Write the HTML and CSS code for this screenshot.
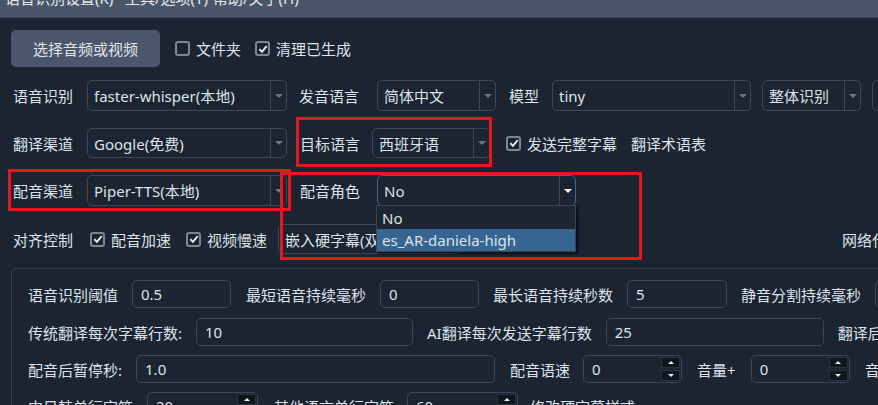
FILE: index.html
```html
<!DOCTYPE html>
<html lang="zh-CN">
<head>
    <meta charset="UTF-8">
    <meta name="viewport" content="width=device-width, initial-scale=1.0">
    <title>视频翻译配音</title>
    <link rel="stylesheet" href="styles.css">
</head>
<body>
    <div class="menubar">
        <div class="menu-items">
            <span class="m-first">语音识别设置(R)</span>
            <span class="m-second">工具/选项(T)</span>
            <span>帮助/关于(H)</span>
        </div>
    </div>

    <div class="toolbar">
        <button class="btn-select">选择音频或视频</button>
        <label class="check m15"><span class="box"></span>文件夹</label>
        <label class="check m14"><span class="box"><svg viewBox="0 0 10 10"><path d="M1.4 5.2 L3.9 7.8 L8.7 2.2"/></svg></span>清理已生成</label>
    </div>

    <div class="row r2">
        <span class="lbl">语音识别</span>
        <div class="combo m14 w200"><span class="val">faster-whisper(本地)</span><span class="arrow"></span></div>
        <span class="lbl m12">发音语言</span>
        <div class="combo m18 w119"><span class="val">简体中文</span><span class="arrow"></span></div>
        <span class="lbl m13">模型</span>
        <div class="combo m13 w199"><span class="val">tiny</span><span class="arrow"></span></div>
        <div class="combo m11 w99"><span class="val">整体识别</span><span class="arrow"></span></div>
        <div class="combo m11 w99"><span class="val"></span><span class="arrow"></span></div>
    </div>

    <div class="row r3">
        <span class="lbl">翻译渠道</span>
        <div class="combo m14 w200"><span class="val">Google(免费)</span><span class="arrow"></span></div>
        <span class="lbl m13">目标语言</span>
        <div class="combo m12 w118"><span class="val">西班牙语</span><span class="arrow"></span></div>
        <label class="check m16"><span class="box"><svg viewBox="0 0 10 10"><path d="M1.4 5.2 L3.9 7.8 L8.7 2.2"/></svg></span>发送完整字幕</label>
        <span class="lbl m14">翻译术语表</span>
    </div>

    <div class="row r4">
        <span class="lbl">配音渠道</span>
        <div class="combo m14 w200"><span class="val">Piper-TTS(本地)</span><span class="arrow"></span></div>
        <span class="lbl m13">配音角色</span>
        <div class="combo focus m17 w199"><span class="val">No</span><span class="arrow"></span></div>
    </div>

    <div class="row r5">
        <span class="lbl">对齐控制</span>
        <label class="check m17"><span class="box"><svg viewBox="0 0 10 10"><path d="M1.4 5.2 L3.9 7.8 L8.7 2.2"/></svg></span>配音加速</label>
        <label class="check m15"><span class="box"><svg viewBox="0 0 10 10"><path d="M1.4 5.2 L3.9 7.8 L8.7 2.2"/></svg></span>视频慢速</label>
        <div class="combo m11 w184"><span class="val">嵌入硬字幕(双语)</span><span class="arrow"></span></div>
        <span class="lbl proxy">网络代理</span>
    </div>

    <div class="group">
        <div class="grow">
            <span>语音识别阈值</span>
            <div class="field w99">0.5</div>
            <span class="g1">最短语音持续毫秒</span>
            <div class="field w99">0</div>
            <span>最长语音持续秒数</span>
            <div class="field w100">5</div>
            <span>静音分割持续毫秒</span>
            <div class="field w100">200</div>
        </div>
        <div class="grow gb">
            <span>传统翻译每次字幕行数:</span>
            <div class="field w217">10</div>
            <span>AI翻译每次发送字幕行数</span>
            <div class="field w218">25</div>
            <span>翻译后字幕</span>
        </div>
        <div class="grow">
            <span>配音后暂停秒:</span>
            <div class="field w359">1.0</div>
            <span class="g1">配音语速</span>
            <div class="field spin w99 gm">0<span class="spin-btns"><i class="up"></i><i class="down"></i></span></div>
            <span class="g1">音量+</span>
            <div class="field spin w99 g1">0<span class="spin-btns"><i class="up"></i><i class="down"></i></span></div>
            <span class="g1">音调+</span>
        </div>
        <div class="grow">
            <span>中日韩单行字符</span>
            <div class="field spin w111">20<span class="spin-btns"><i class="up"></i><i class="down"></i></span></div>
            <span class="g2">其他语言单行字符</span>
            <div class="field spin w111 gm">60<span class="spin-btns"><i class="up"></i><i class="down"></i></span></div>
            <span class="gs">修改硬字幕样式</span>
        </div>
    </div>

    <div class="popup">
        <div>No</div>
        <div class="hl">es_AR-daniela-high</div>
    </div>

    <div class="mark mark-a"></div>
    <div class="mark mark-b"></div>
    <div class="mark mark-c"></div>
</body>
</html>
```

FILE: styles.css
```css
* {
    box-sizing: border-box;
}
body {
    margin: 0;
    width: 878px;
    height: 405px;
    overflow: hidden;
    position: relative;
    background: #1b2430;
    color: #dde3eb;
    font-family: "Noto Sans", "Noto Sans CJK SC", sans-serif;
    font-size: 15px;
}
.menubar {
    height: 18px;
    background: #495669;
    border-bottom: 1px solid #3a4658;
    overflow: hidden;
}
.menu-items {
    display: flex;
    padding-left: 5px;
    margin-top: -9px;
    line-height: 15px;
    color: #e4e8ee;
    white-space: nowrap;
}
.m-first {
    width: 120px;
}
.m-second {
    width: 88px;
}
.toolbar {
    display: flex;
    align-items: center;
    height: 37px;
    margin-top: 12px;
    padding-left: 11px;
}
.btn-select {
    width: 149px;
    height: 37px;
    flex-shrink: 0;
    background: #4a566a;
    border: none;
    border-radius: 5px;
    color: #e1e6ee;
    font: inherit;
}
.check {
    display: flex;
    align-items: center;
    gap: 6px;
    flex-shrink: 0;
    white-space: nowrap;
}
.box {
    width: 15px;
    height: 15px;
    border: 2px solid #80878f;
    border-radius: 3px;
    background: #1b2430;
    display: flex;
    align-items: center;
    justify-content: center;
}
.box svg {
    width: 10px;
    height: 10px;
    fill: none;
    stroke: #eef1f5;
    stroke-width: 1.9;
}
.row {
    display: flex;
    align-items: center;
    padding-left: 13px;
    white-space: nowrap;
}
.row > * {
    flex-shrink: 0;
}
.r2 {
    height: 31px;
    margin-top: 13px;
}
.r3 {
    height: 30px;
    margin-top: 17px;
}
.r4 {
    height: 31px;
    margin-top: 17px;
}
.r5 {
    height: 30px;
    margin-top: 18px;
}
.m11 { margin-left: 11px; }
.m12 { margin-left: 12px; }
.m13 { margin-left: 13px; }
.m14 { margin-left: 14px; }
.m15 { margin-left: 15px; }
.m16 { margin-left: 16px; }
.m17 { margin-left: 17px; }
.m18 { margin-left: 18px; }
.proxy {
    margin-left: 380px;
}
.combo {
    height: 100%;
    display: flex;
    border: 1px solid #3c4656;
    border-radius: 5px;
}
.combo .val {
    flex: 1;
    padding-left: 6px;
    display: flex;
    align-items: center;
    overflow: hidden;
}
.combo .arrow {
    width: 16px;
    border-left: 1px solid #3c4656;
    display: flex;
    align-items: center;
    justify-content: center;
}
.combo .arrow::after {
    content: "";
    border-left: 4px solid transparent;
    border-right: 4px solid transparent;
    border-top: 4px solid #6c7584;
}
.combo.focus {
    border-color: #3b6690;
}
.combo.focus .arrow::after {
    border-top-color: #f2f4f7;
}
.w99 { width: 99px; }
.w100 { width: 100px; }
.w111 { width: 111px; }
.w118 { width: 118px; }
.w119 { width: 119px; }
.w184 { width: 184px; }
.w199 { width: 199px; }
.w200 { width: 200px; }
.w217 { width: 217px; }
.w218 { width: 218px; }
.w359 { width: 359px; }
.group {
    margin: 14px 0 0 11px;
    width: 1000px;
    border: 1px solid #38414f;
    border-radius: 6px;
    padding: 11px 0 20px 16px;
}
.grow {
    display: flex;
    align-items: center;
    gap: 14px;
    height: 28px;
    white-space: nowrap;
}
.grow > * {
    flex-shrink: 0;
}
.grow + .grow {
    margin-top: 9px;
}
.grow.gb {
    margin-top: 10px;
}
.g1 {
    margin-left: 1px;
}
.g2 {
    margin-left: 2px;
}
.gm {
    margin-left: -1px;
}
.gs {
    margin-left: -2px;
}
.field {
    height: 28px;
    border: 1px solid #3c4656;
    border-radius: 5px;
    padding-left: 8px;
    display: flex;
    align-items: center;
}
.spin-btns {
    margin-left: auto;
    margin-right: 1px;
    display: flex;
    flex-direction: column;
    gap: 2px;
}
.spin-btns i {
    width: 19px;
    height: 11px;
    background: #10161d;
    border: 1px solid #2a323d;
    display: flex;
    align-items: center;
    justify-content: center;
}
.spin-btns i::after {
    content: "";
    border-left: 3px solid transparent;
    border-right: 3px solid transparent;
}
.spin-btns .up::after {
    border-bottom: 3px solid #e6e9ee;
}
.spin-btns .down::after {
    border-top: 3px solid #e6e9ee;
}
.popup {
    position: absolute;
    left: 376px;
    top: 205px;
    width: 200px;
    height: 47px;
    background: #1c2531;
    border: 1px solid #3a4452;
    box-shadow: 2px 2px 2px rgba(0, 0, 0, 0.55);
    padding-top: 1px;
}
.popup div {
    height: 22px;
    line-height: 22px;
    padding-left: 5px;
}
.popup .hl {
    background: #356590;
}
.mark {
    position: absolute;
    border: 3px solid #e5161d;
}
.mark-a {
    left: 8px;
    top: 169px;
    width: 283px;
    height: 42px;
}
.mark-b {
    left: 280px;
    top: 172px;
    width: 362px;
    height: 88px;
}
.mark-c {
    left: 296px;
    top: 117px;
    width: 196px;
    height: 50px;
}
```
